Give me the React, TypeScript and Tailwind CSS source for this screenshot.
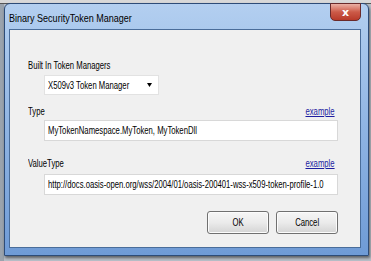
import React from "react";

const font = { fontFamily: '"Liberation Sans", Arial, sans-serif' };

function T({ children, right = false, link = false }: { children: React.ReactNode; right?: boolean; link?: boolean }) {
  const base = right ? "origin-right" : "origin-left";
  return (
    <span
      className={
        "inline-block whitespace-nowrap scale-x-[0.7] " +
        base +
        (link ? " underline text-[#1c1ca0]" : "")
      }
    >
      {children}
    </span>
  );
}

function Btn({ label }: { label: string }) {
  return (
    <div className="w-[62px] h-[23px] rounded-[3px] border border-[#707070] bg-gradient-to-b from-[#f6f6f6] via-[#ebebeb] to-[#d4d4d4] shadow-[inset_0_0_0_1px_#fcfcfc] flex items-center justify-center">
      <span className="inline-block scale-x-[0.7]">{label}</span>
    </div>
  );
}

export default function App() {
  return (
    <div className="w-[371px] h-[261px] overflow-hidden bg-[#b9c0c9] relative" style={font}>
      {/* background behind window */}
      <div className="absolute left-0 top-0 w-[371px] h-[4px] bg-[#d8d8d8] border-b border-[#555]" />
      <div className="absolute left-0 top-[4px] w-[4px] h-[257px] bg-[#9aa3ad]" />
      {/* window */}
      <div className="absolute left-[4px] top-[3px] w-[365px] h-[253px] rounded-t-[6px] border border-[#2d4c78] bg-gradient-to-b from-[#b3cff0] via-[#8fb4e3] to-[#6f9bd6] shadow-[1px_2px_3px_rgba(0,0,0,0.5)] flex flex-col">
        <div className="h-[25px] flex items-start relative">
          <div className="pl-[4px] pt-[8px] text-[11px] leading-[13px] text-black">
            <span className="inline-block whitespace-nowrap origin-left scale-x-[0.82]">Binary SecurityToken Manager</span>
          </div>
          <div className="absolute right-[7px] top-[-1px] w-[31px] h-[18px] rounded-b-[5px] border border-[#6a2a2a] bg-gradient-to-b from-[#eab0a4] via-[#cc5a48] to-[#b83a2a] flex items-center justify-center">
            <span className="text-white text-[11px] font-bold leading-none" style={{ fontFamily: '"DejaVu Sans", sans-serif' }}>x</span>
          </div>
        </div>
        <div className="mx-[4px] mb-[7px] flex-1 mr-[7px] border border-[#4a6d9a] bg-[#f0f0f0] flex flex-col text-[11px] text-black">
          <div className="pl-[18px] pt-[29px] leading-[12px]"><T>Built In Token Managers</T></div>
          <div className="ml-[34px] mt-[4px] w-[115px] h-[20px] bg-white border border-[#e2e2e2] flex items-center pl-[3px] pr-[6px]">
            <div className="flex-1 min-w-0"><T>X509v3 Token Manager</T></div>
            <svg width="5" height="4" viewBox="0 0 5 4" className="shrink-0"><path d="M0 0 L5 0 L2.5 4 Z" fill="#000" /></svg>
          </div>
          <div className="flex justify-between items-center pl-[18px] pr-[25px] mt-[10px] h-[12px] leading-[12px]">
            <T>Type</T>
            <T right link>example</T>
          </div>
          <div className="ml-[34px] mr-[22px] mt-[3px] h-[21px] bg-white border border-[#d8d8d8] flex items-center pl-[3px] overflow-hidden">
            <T>MyTokenNamespace.MyToken, MyTokenDll</T>
          </div>
          <div className="flex justify-between items-center pl-[18px] pr-[25px] mt-[16px] h-[12px] leading-[12px]">
            <T>ValueType</T>
            <T right link>example</T>
          </div>
          <div className="ml-[34px] mr-[22px] mt-[5px] h-[21px] bg-white border border-[#d8d8d8] flex items-center pl-[3px] overflow-hidden">
            <T>http://docs.oasis-open.org/wss/2004/01/oasis-200401-wss-x509-token-profile-1.0</T>
          </div>
          <div className="flex justify-end gap-[7px] mr-[22px] mt-[16px]">
            <Btn label="OK" />
            <Btn label="Cancel" />
          </div>
        </div>
      </div>
    </div>
  );
}
